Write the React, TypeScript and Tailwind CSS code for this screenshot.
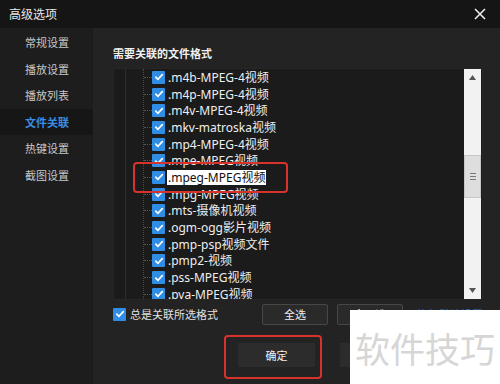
import React from "react";

const items = [
  ".m4b-MPEG-4视频",
  ".m4p-MPEG-4视频",
  ".m4v-MPEG-4视频",
  ".mkv-matroska视频",
  ".mp4-MPEG-4视频",
  ".mpe-MPEG视频",
  ".mpeg-MPEG视频",
  ".mpg-MPEG视频",
  ".mts-摄像机视频",
  ".ogm-ogg影片视频",
  ".pmp-psp视频文件",
  ".pmp2-视频",
  ".pss-MPEG视频",
  ".pva-MPEG视频",
];

const side = ["常规设置", "播放设置", "播放列表", "文件关联", "热键设置", "截图设置"];

function Check() {
  return (
    <span className="w-[13px] h-[13px] bg-[#2f8de4] rounded-[1px] flex items-center justify-center shrink-0">
      <svg width="10" height="10" viewBox="0 0 10 10">
        <path d="M1.8 5.2 L4 7.3 L8.3 2.6" stroke="white" strokeWidth="1.7" fill="none" strokeLinecap="round" strokeLinejoin="round" />
      </svg>
    </span>
  );
}

export default function App() {
  return (
    <div
      className="w-[500px] h-[384px] flex flex-col bg-[#151515] overflow-hidden relative"
      style={{ fontFamily: '"Noto Sans CJK SC", "Noto Sans", sans-serif' }}
    >
      {/* title bar */}
      <div className="h-[28px] flex items-center justify-between pl-[9px] pr-[14px] shrink-0">
        <span className="text-[12px] text-[#e8e8e8] leading-none">高级选项</span>
        <svg width="12" height="12" viewBox="0 0 12 12">
          <path d="M1 1 L11 11 M11 1 L1 11" stroke="#f0f0f0" strokeWidth="1.5" />
        </svg>
      </div>
      <div className="flex flex-1 min-h-0">
        {/* sidebar */}
        <div className="w-[93px] bg-[#1d1d1d] flex flex-col pt-[1px] shrink-0">
          {side.map((s, i) => (
            <div
              key={s}
              className={
                "h-[26.6px] flex items-center pl-[25px] text-[11px] " +
                (i === 3 ? "bg-[#161616] text-[#3a8ee6] font-bold" : "text-[#c8c8c8]")
              }
            >
              {s}
            </div>
          ))}
        </div>
        {/* main */}
        <div className="flex-1 bg-[#232323] flex flex-col pl-[20px] pt-[18px]">
          <div className="text-[11px] leading-[14px] font-bold text-[#f2f2f2] mb-[8px]">需要关联的文件格式</div>
          <div className="w-[370px] h-[232px] bg-[#1b1b1b] flex border border-[#262626] overflow-hidden">
            <div className="w-[12px] border-r border-[#2e2e2e] shrink-0" />
            <div className="w-[18px] border-r border-dotted border-[#4a4a4a] shrink-0" />
            <div className="flex-1 flex flex-col">
              {items.map((t, i) => (
                <div key={t} className="h-[16.7px] flex items-center shrink-0">
                  <span className="w-[8px] border-t border-dotted border-[#555] shrink-0" />
                  <Check />
                  <span
                    className={
                      "ml-[2px] text-[12px] leading-[15px] whitespace-nowrap px-[1px] " +
                      (i === 6 ? "bg-white text-[#111]" : "text-[#eeeeee]")
                    }
                    style={{ fontFamily: '"Noto Sans", "Noto Sans CJK SC", sans-serif' }}
                  >
                    {t}
                  </span>
                </div>
              ))}
            </div>
            {/* scrollbar */}
            <div className="w-[17px] bg-[#f2f2f2] flex flex-col shrink-0 mr-[1px]">
              <div className="h-[17px] flex items-center justify-center">
                <svg width="7" height="5" viewBox="0 0 7 5"><path d="M0 5 L3.5 0 L7 5 Z" fill="#555" /></svg>
              </div>
              <div className="h-[69px]" />
              <div className="h-[43px] bg-[#dedede] border border-[#c8c8c8] flex flex-col items-center justify-center gap-[2px]">
                <span className="w-[6px] h-[1px] bg-[#777]" />
                <span className="w-[6px] h-[1px] bg-[#777]" />
                <span className="w-[6px] h-[1px] bg-[#777]" />
              </div>
              <div className="flex-1" />
              <div className="h-[17px] flex items-center justify-center">
                <svg width="7" height="5" viewBox="0 0 7 5"><path d="M0 0 L7 0 L3.5 5 Z" fill="#555" /></svg>
              </div>
            </div>
          </div>
          {/* bottom row */}
          <div className="h-[24px] mt-[2px] flex items-center">
            <Check />
            <span className="ml-[4px] text-[11px] text-[#e0e0e0] w-[88px] whitespace-nowrap">总是关联所选格式</span>
            <div className="ml-[44px] w-[66px] h-[21px] bg-[#2a2a2a] border border-[#474747] rounded-[2px] flex items-center justify-center text-[11px] text-[#eee]">全选</div>
            <div className="ml-[9px] w-[66px] h-[21px] bg-[#2a2a2a] border border-[#474747] rounded-[2px] flex items-center justify-center text-[11px] text-[#eee]">全不选</div>
            <span className="ml-[14px] text-[11px] text-[#2d79c7] whitespace-nowrap">恢复默认设置</span>
          </div>
          {/* ok row */}
          <div className="mt-[17px] flex">
            <div className="ml-[125px] w-[77px] h-[24px] bg-[#2c2c2c] flex items-center justify-center text-[11px] text-[#f0f0f0]">确定</div>
            <div className="ml-[25px] w-[77px] h-[24px] bg-[#2c2c2c] flex items-center justify-center text-[11px] text-[#f0f0f0]">取消</div>
          </div>
        </div>
      </div>

      {/* annotations */}
      <div className="absolute left-[133px] top-[162px] w-[155px] h-[31px] border-[2.5px] border-[#d8322c] rounded-[4px]" />
      <div className="absolute left-[224px] top-[335px] w-[98px] h-[44px] border-[2.5px] border-[#d8322c] rounded-[4px]" />
      {/* watermark */}
      <div className="absolute left-[350px] top-[310px] w-[150px] h-[74px] bg-white flex items-center justify-center">
        <span className="text-[35px] leading-none text-[#d6d6d6] whitespace-nowrap">软件技巧</span>
      </div>
    </div>
  );
}
